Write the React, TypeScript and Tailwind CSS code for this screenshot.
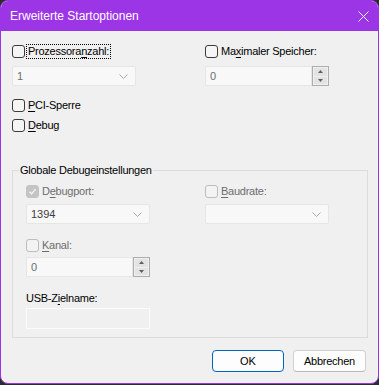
import React from "react";

const font = { fontFamily: '"Liberation Sans", Arial, sans-serif' };

type CheckProps = {
  label: React.ReactNode;
  checked?: boolean;
  disabled?: boolean;
  focus?: boolean;
  className?: string;
};

const Check = ({ label, checked, disabled, focus, className }: CheckProps) => {
  let box = "border-[#3b3b3b] bg-[#f5f5f5]";
  if (disabled) box = "border-[#bdbdbd] bg-[#f3f3f3]";
  if (disabled && checked) box = "border-[#c4c4c4] bg-[#c4c4c4]";
  return (
    <div className={"flex items-center h-[13px] " + (className || "")}>
      <div className={"w-[13px] h-[13px] rounded-[3px] border flex items-center justify-center " + box}>
        {checked && (
          <svg width="9" height="9" viewBox="0 0 9 9">
            <path d="M1.5 4.8 L3.6 6.8 L7.6 2.2" fill="none" stroke="#f7f7f7" strokeWidth="1.2" />
          </svg>
        )}
      </div>
      <span
        className={
          "ml-[1px] px-[1px] leading-[13px] text-[11px] tracking-[-0.25px] border " +
          (focus ? "border-dotted border-black " : "border-transparent ") +
          (disabled ? "text-[#6d6d6d]" : "text-black")
        }
      >
        {label}
      </span>
    </div>
  );
};

const U = ({ children }: { children: React.ReactNode }) => (
  <span className="underline underline-offset-2 decoration-1">{children}</span>
);

const Chevron = () => (
  <svg width="9" height="5" viewBox="0 0 9 5">
    <path d="M0.5 0.5 L4.5 4.5 L8.5 0.5" fill="none" stroke="#a8a8a8" strokeWidth="1" />
  </svg>
);

const Combo = ({ value, dark, className }: { value?: string; dark?: boolean; className?: string }) => (
  <div
    className={
      "w-[124px] h-[20px] rounded-[2px] border border-[#e6e6e6] bg-[#f8f8f8] flex items-center justify-between pl-[4px] pr-[7px] text-[11px] " +
      (dark ? "text-[#3d3d3d] " : "text-[#6d6d6d] ") +
      (className || "")
    }
  >
    <span>{value}</span>
    <Chevron />
  </div>
);

const Spin = ({ value, className }: { value: string; className?: string }) => (
  <div className={"flex w-[124px] h-[20px] " + (className || "")}>
    <div className="flex-1 border border-[#e6e6e6] bg-[#f8f8f8] flex items-center pl-[4px] text-[11px] text-[#6d6d6d]">
      {value}
    </div>
    <div className="w-[17px] border border-[#adadad] flex flex-col bg-[#f0f0f0]">
      <div className="flex-1 m-[1px] mb-0 bg-[#e3e3e3] flex items-center justify-center">
        <svg width="5" height="3" viewBox="0 0 5 3">
          <path d="M0 3 L2.5 0 L5 3 Z" fill="#606060" />
        </svg>
      </div>
      <div className="flex-1 m-[1px] bg-[#e3e3e3] flex items-center justify-center">
        <svg width="5" height="3" viewBox="0 0 5 3">
          <path d="M0 0 L2.5 3 L5 0 Z" fill="#606060" />
        </svg>
      </div>
    </div>
  </div>
);

const App = () => {
  return (
    <div className="w-[379px] h-[385px] bg-[#2d2d2d]" style={font}>
      <div className="w-[379px] h-[384px] rounded-[8px] border border-[#9b35e6] bg-[#f0f0f0] overflow-hidden flex flex-col">
        <div className="h-[30px] bg-[#9b35e6] flex items-center justify-between pl-[9px] pr-[9px]">
          <span className="text-white text-[12px]">Erweiterte Startoptionen</span>
          <svg width="11" height="11" viewBox="0 0 11 11">
            <path d="M0.5 0.5 L10.5 10.5 M10.5 0.5 L0.5 10.5" stroke="#ffffff" strokeWidth="1" />
          </svg>
        </div>

        <div className="flex flex-col pl-[11px] pr-[10px] pt-[14px]">
          <div className="flex">
            <div className="w-[193px] flex flex-col">
              <Check focus label={<>Prozessora<U>n</U>zahl:</>} />
              <Combo value="1" className="mt-[8px]" />
              <Check className="mt-[13px]" label={<><U>P</U>CI-Sperre</>} />
              <Check className="mt-[7px]" label={<><U>D</U>ebug</>} />
            </div>
            <div className="flex flex-col">
              <Check label={<>Ma<U>x</U>imaler Speicher:</>} />
              <Spin value="0" className="mt-[8px]" />
            </div>
          </div>

          <fieldset className="mt-[31px] border border-[#dcdcdc] pb-[8px]">
            <legend className="ml-[6px] px-[1px] text-[11px] tracking-[-0.25px] text-black leading-[15px]">
              Globale Debugeinstellungen
            </legend>
            <div className="pl-[13px]">
              <div className="flex pt-[7px]">
                <div className="w-[179px] flex flex-col">
                  <Check checked disabled label={<>D<U>e</U>bugport:</>} />
                  <Combo value="1394" dark className="mt-[6px]" />
                  <Check disabled className="mt-[15px]" label={<><U>K</U>anal:</>} />
                  <Spin value="0" className="mt-[5px]" />
                </div>
                <div className="flex flex-col">
                  <Check disabled label={<><U>B</U>audrate:</>} />
                  <Combo className="mt-[6px]" />
                </div>
              </div>
              <div className="mt-[14px] text-[11px] tracking-[-0.25px] text-black leading-[15px] pl-[0px]">
                USB-Z<U>i</U>elname:
              </div>
              <div className="mt-[2px] w-[124px] h-[21px] border border-[#fbfbfb] bg-[#f0f0f0]" />
            </div>
          </fieldset>

          <div className="flex justify-end gap-[9px] mt-[12px] pr-[2px]">
            <button className="w-[72px] h-[22px] rounded-[4px] border border-[#0067c0] bg-[#fdfdfd] text-[11px] text-black">
              OK
            </button>
            <button className="w-[73px] h-[22px] rounded-[4px] border border-[#d0d0d0] border-b-[#b8b8b8] bg-[#fdfdfd] text-[11px] tracking-[-0.25px] text-black">
              Abbrechen
            </button>
          </div>
        </div>
      </div>
    </div>
  );
};

export default App;
